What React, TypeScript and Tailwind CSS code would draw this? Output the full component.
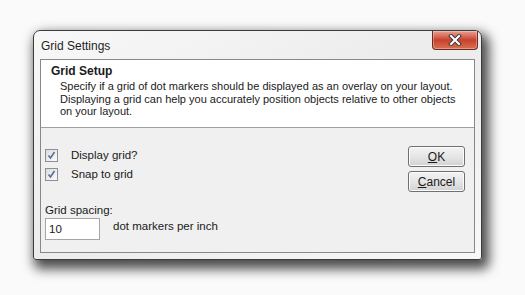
import type { ReactNode } from "react";

function CheckBox() {
  return (
    <span className="flex h-[13px] w-[13px] items-center justify-center border border-[#8f8f8f] bg-gradient-to-br from-[#dcdcdc] to-[#fbfbfb]">
      <svg viewBox="0 0 11 11" className="h-[11px] w-[11px]">
        <path d="M2.5 5.5 L4.5 8 L8.5 2" fill="none" stroke="#5a6c9c" strokeWidth="1.6" />
      </svg>
    </span>
  );
}

function Button({ children }: { children: ReactNode }) {
  return (
    <button className="flex h-[21px] w-[57px] items-center justify-center rounded-[3px] border border-[#707070] bg-gradient-to-b from-[#f3f3f3] via-[#e6e6e6] to-[#d2d2d2] text-[12px] text-[#1a1a1a] shadow-[inset_0_0_0_1px_#fcfcfc]">
      {children}
    </button>
  );
}

function CloseButton() {
  return (
    <div className="flex h-[19px] w-[46px] items-center justify-center rounded-b-[4px] border border-t-0 border-[#6e2a22] bg-gradient-to-b from-[#eaa091] via-[#c8402e] to-[#d8704f] shadow-[inset_0_0_0_1px_rgba(255,255,255,0.3)]">
      <svg viewBox="0 0 14 12" className="h-[12px] w-[14px]">
        <path d="M3 2 L11 10 M11 2 L3 10" stroke="#3b3b3b" strokeWidth="4" strokeLinecap="square" />
        <path d="M3 2 L11 10 M11 2 L3 10" stroke="#ffffff" strokeWidth="2" strokeLinecap="square" />
      </svg>
    </div>
  );
}

export default function App() {
  return (
    <div
      className="h-[295px] w-[525px] bg-[#fafafa] pl-[33px] pt-[30px] text-[#1a1a1a]"
      style={{ fontFamily: '"Liberation Sans", Arial, sans-serif' }}
    >
      <div className="flex h-[230px] w-[449px] flex-col rounded-t-[7px] rounded-b-[3px] border border-[#3c3c3c] bg-gradient-to-br from-[#f8f8f8] via-[#ececec] to-[#f8f8f8] shadow-[4px_6px_12px_3px_rgba(0,0,0,0.7)]">
        <div className="flex h-[28px] items-start justify-between pl-[7px] pr-[3px]">
          <span className="pt-[8px] text-[12px] leading-[14px] text-[#1e1e1e]">Grid Settings</span>
          <CloseButton />
        </div>
        <div className="mx-[6px] flex flex-1 flex-col border border-[#888888] bg-[#f0f0f0]">
          <div className="h-[68px] whitespace-nowrap border-b border-[#a0a0a0] bg-white pl-[10px] pt-[4px]">
            <div className="text-[12px] font-bold leading-[15px]">Grid Setup</div>
            <div className="pl-[9px] pt-[1px] text-[11px] leading-[12.5px]">
              Specify if a grid of dot markers should be displayed as an overlay on your layout.
              <br />
              Displaying a grid can help you accurately position objects relative to other objects
              <br />
              on your layout.
            </div>
          </div>
          <div className="flex flex-1 justify-between pl-[4px] pr-[9px] pt-[18px]">
            <div className="flex flex-col">
              <div className="flex h-[19px] items-center gap-[13px] text-[11.5px]">
                <CheckBox />
                Display grid?
              </div>
              <div className="flex h-[19px] items-center gap-[13px] text-[11.5px]">
                <CheckBox />
                Snap to grid
              </div>
              <div className="pt-[19px] text-[11.5px] leading-[14px]">Grid spacing:</div>
              <div className="flex items-center gap-[13px] pt-[1px]">
                <div className="flex h-[22px] w-[55px] items-center border border-[#a5a5a5] bg-white pl-[3px] pt-[2px] text-[11.5px]">
                  10
                </div>
                <span className="pb-[4px] text-[11.5px]">dot markers per inch</span>
              </div>
            </div>
            <div className="flex flex-col gap-[4px]">
              <Button>
                <span className="underline">O</span>K
              </Button>
              <Button>
                <span className="underline">C</span>ancel
              </Button>
            </div>
          </div>
        </div>
        <div className="h-[6px]" />
      </div>
    </div>
  );
}
